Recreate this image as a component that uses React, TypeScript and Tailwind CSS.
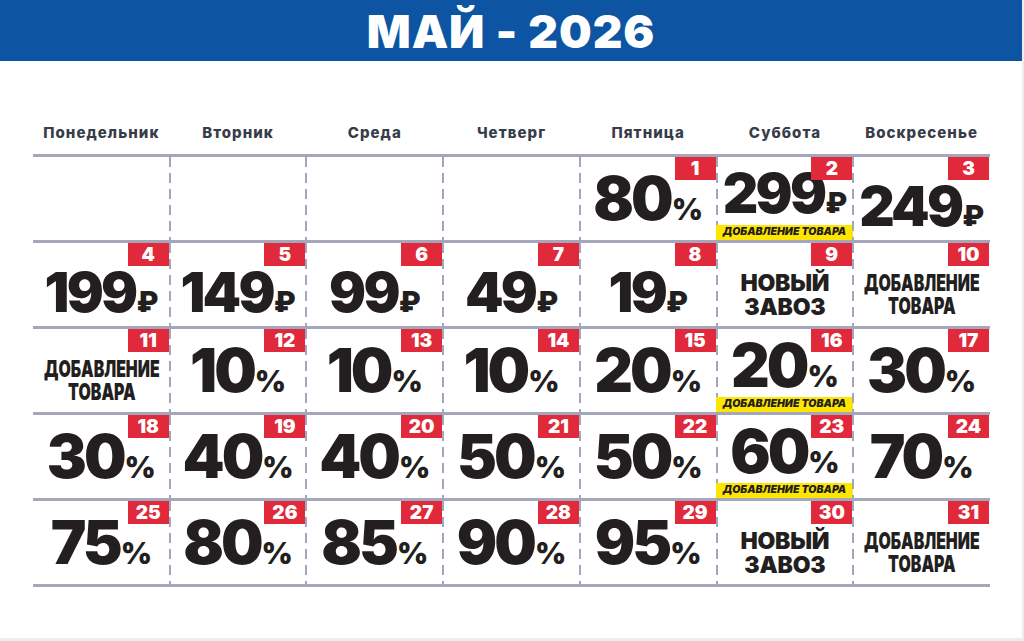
import React from "react";

type Kind = "pct" | "rub" | "new" | "add";

type Day = {
  d: number;
  kind: Kind;
  v?: string;
  label?: boolean;
};

const DAYS = [
  "Понедельник",
  "Вторник",
  "Среда",
  "Четверг",
  "Пятница",
  "Суббота",
  "Воскресенье",
];

const p = (d: number, v: string, label = false): Day => ({ d, kind: "pct", v, label });
const r = (d: number, v: string, label = false): Day => ({ d, kind: "rub", v, label });
const n = (d: number): Day => ({ d, kind: "new" });
const a = (d: number): Day => ({ d, kind: "add" });

const WEEKS: (Day | null)[][] = [
  [null, null, null, null, p(1, "80"), r(2, "299", true), r(3, "249")],
  [r(4, "199"), r(5, "149"), r(6, "99"), r(7, "49"), r(8, "19"), n(9), a(10)],
  [a(11), p(12, "10"), p(13, "10"), p(14, "10"), p(15, "20"), p(16, "20", true), p(17, "30")],
  [p(18, "30"), p(19, "40"), p(20, "40"), p(21, "50"), p(22, "50"), p(23, "60", true), p(24, "70")],
  [p(25, "75"), p(26, "80"), p(27, "85"), p(28, "90"), p(29, "95"), n(30), a(31)],
];

const Value = ({ day }: { day: Day }) => {
  if (day.kind === "new") {
    return (
      <div className="pt-[20px] text-center text-[23px] leading-[24px] font-black tracking-[-0.01em] text-[#231f20]">
        <div>НОВЫЙ</div>
        <div>ЗАВОЗ</div>
      </div>
    );
  }
  if (day.kind === "add") {
    return (
      <div className="pt-[20px] text-center text-[23px] leading-[23px] font-black text-[#231f20] scale-x-[0.69]">
        <div>ДОБАВЛЕНИЕ</div>
        <div>ТОВАРА</div>
      </div>
    );
  }
  const isRub = day.kind === "rub";
  return (
    <div
      className={`flex items-baseline text-[#231f20] font-black h-[48px] ${
        day.label ? "mt-[4px]" : isRub ? "mt-[14px]" : "-mt-[2px]"
      }`}
    >
      <span
        className={`${isRub ? "text-[55px]" : "text-[60px]"} leading-[48px] tracking-[-0.05em]`}
      >
        {day.v}
      </span>
      <span className={`${isRub ? "text-[28px]" : "text-[30px]"} leading-[48px] ml-px`}>
        {isRub ? "₽" : "%"}
      </span>
    </div>
  );
};

const Cell = ({ day, first }: { day: Day | null; first: boolean }) => (
  <div className="relative flex flex-col">
    {!first && (
      <div className="absolute -left-px top-0 bottom-0 w-[2px] bg-[repeating-linear-gradient(to_bottom,#a4a7bb_0px,#a4a7bb_10px,transparent_10px,transparent_16px)]" />
    )}
    {day && (
      <div className="absolute top-0 right-px w-[41px] h-[23px] bg-[#e0293a] text-white text-[19px] font-black leading-none flex items-center justify-center">
        {day.d}
      </div>
    )}
    <div className="flex-1 flex items-center justify-center">
      {day && <Value day={day} />}
    </div>
    {day?.label && (
      <div className="relative h-[15px] -ml-px bg-[#ffe600] flex items-center justify-center text-[10.5px] font-black italic text-[#231f20] leading-none">
        ДОБАВЛЕНИЕ ТОВАРА
      </div>
    )}
  </div>
);

export default function App() {
  return (
    <div className="w-[1024px] h-[641px] bg-white overflow-hidden font-['Inter',sans-serif] border-r-[2px] border-b-[3px] border-[#ededf0]">
      <header className="h-[61px] bg-[#0d55a2] flex items-center justify-center">
        <h1 className="text-white text-[46px] font-black leading-none tracking-[0.02em]">
          МАЙ - 2026
        </h1>
      </header>

      <div className="ml-[33px] w-[957px]">
        <div className="grid grid-cols-7 h-[93px] items-end pb-[12px]">
          {DAYS.map((d) => (
            <div
              key={d}
              className="text-center text-[15px] leading-[18px] font-extrabold tracking-[0.07em] text-[#373c49]"
            >
              {d}
            </div>
          ))}
        </div>

        <div className="border-t-[3px] border-[#a4a7bb]">
          {WEEKS.map((week, i) => (
            <div
              key={i}
              className="grid grid-cols-7 h-[86px] border-b-[3px] border-[#a4a7bb]"
            >
              {week.map((day, j) => (
                <Cell key={j} day={day} first={j === 0} />
              ))}
            </div>
          ))}
        </div>
      </div>
    </div>
  );
}
